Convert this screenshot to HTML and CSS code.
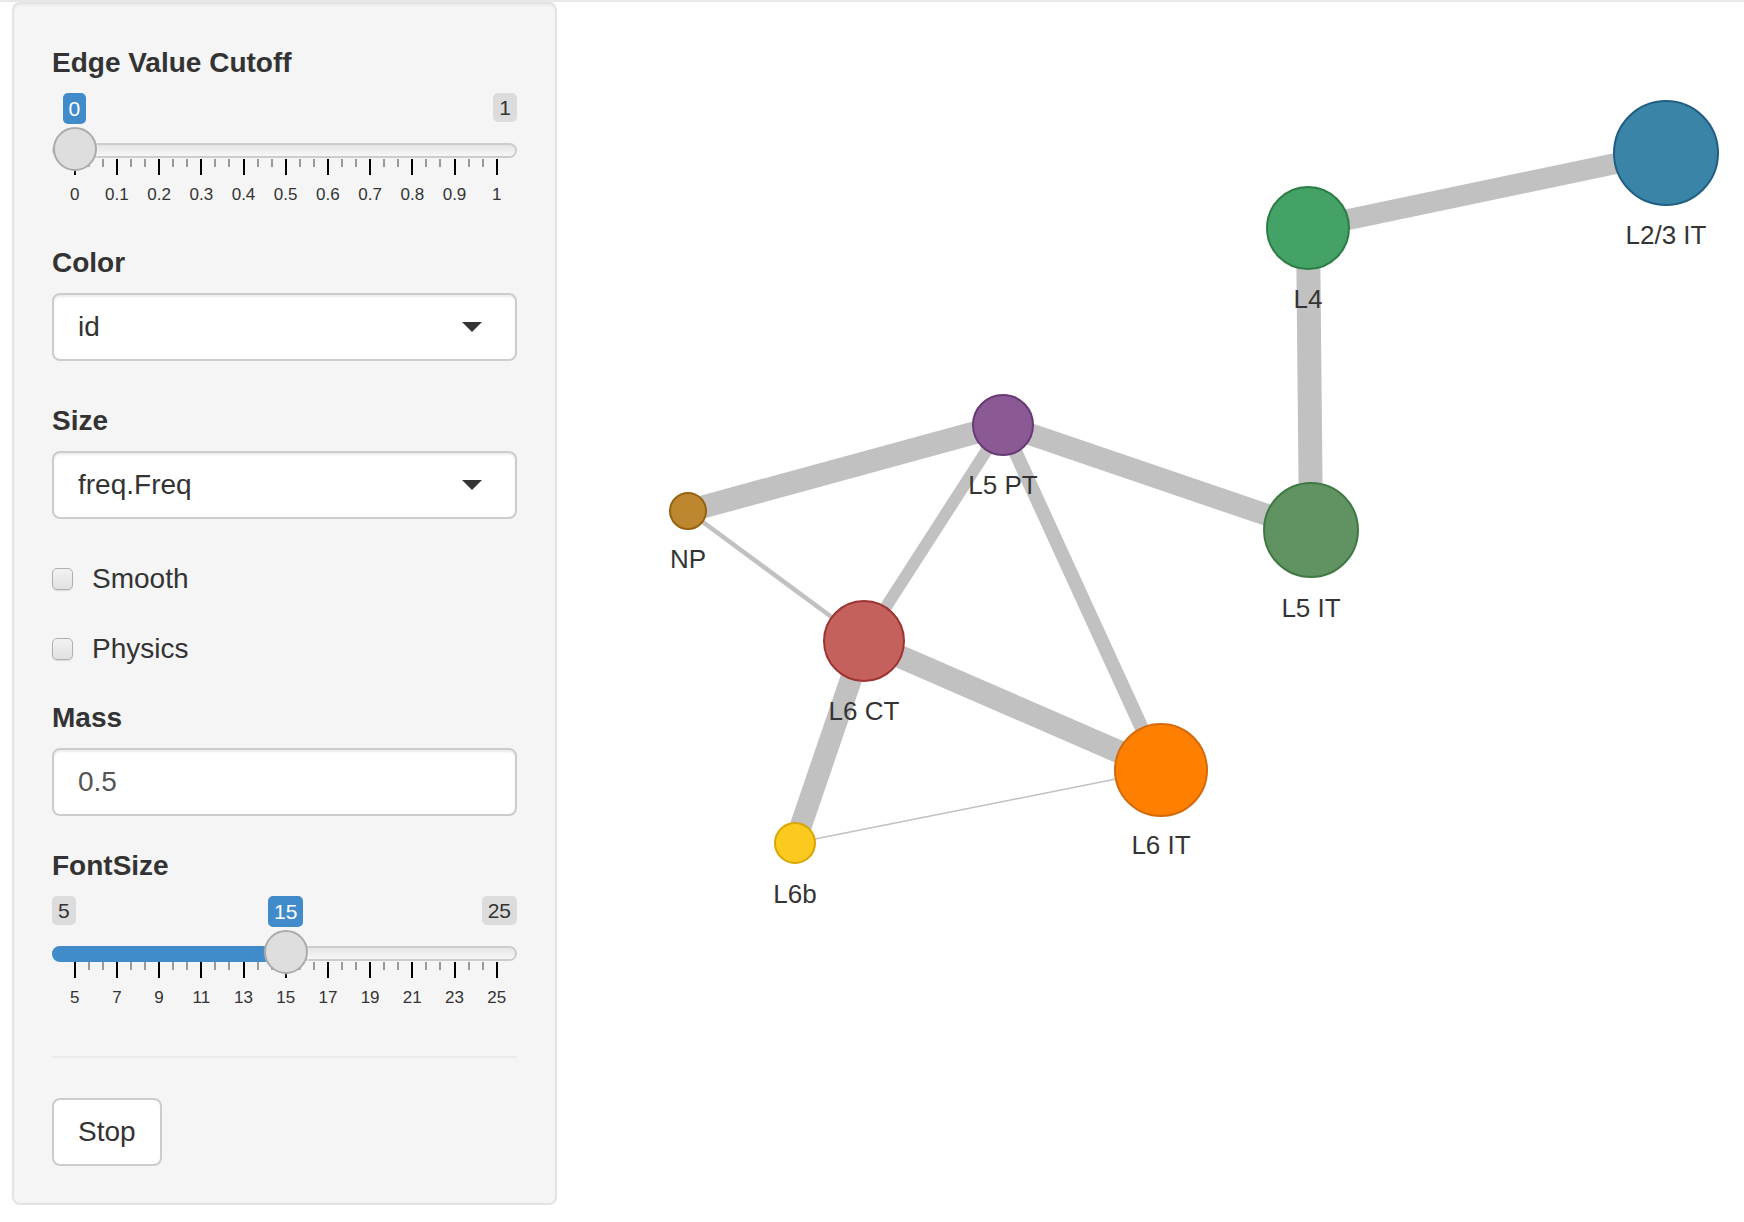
FILE: index.html
```html
<!DOCTYPE html>
<html lang="en">
<head>
<meta charset="utf-8">
<title>Network</title>
<link rel="stylesheet" href="styles.css">
</head>
<body>
<div class="topbar"></div>
<div class="layout">
  <form class="well">
    <div class="group g-edge">
      <label class="ctl-label">Edge Value Cutoff</label>
      <div class="irs">
        <span class="badge badge-single" style="left:10.5px">0</span>
        <span class="badge badge-max">1</span>
        <span class="irs-line"></span>
        <span class="irs-handle" style="left:0.7px"></span>
        <div class="irs-grid">
          <span class="pol" style="left:21.7px"></span><span class="pol small" style="left:35.8px"></span><span class="pol small" style="left:49.8px"></span>
          <span class="pol" style="left:63.9px"></span><span class="pol small" style="left:78px"></span><span class="pol small" style="left:92px"></span>
          <span class="pol" style="left:106.1px"></span><span class="pol small" style="left:120.2px"></span><span class="pol small" style="left:134.2px"></span>
          <span class="pol" style="left:148.3px"></span><span class="pol small" style="left:162.4px"></span><span class="pol small" style="left:176.4px"></span>
          <span class="pol" style="left:190.5px"></span><span class="pol small" style="left:204.6px"></span><span class="pol small" style="left:218.6px"></span>
          <span class="pol" style="left:232.7px"></span><span class="pol small" style="left:246.8px"></span><span class="pol small" style="left:260.8px"></span>
          <span class="pol" style="left:274.9px"></span><span class="pol small" style="left:289px"></span><span class="pol small" style="left:303px"></span>
          <span class="pol" style="left:317.1px"></span><span class="pol small" style="left:331.2px"></span><span class="pol small" style="left:345.2px"></span>
          <span class="pol" style="left:359.3px"></span><span class="pol small" style="left:373.4px"></span><span class="pol small" style="left:387.4px"></span>
          <span class="pol" style="left:401.5px"></span><span class="pol small" style="left:415.6px"></span><span class="pol small" style="left:429.6px"></span>
          <span class="pol" style="left:443.7px"></span>
          <span class="gtext" style="left:22.7px">0</span>
          <span class="gtext" style="left:64.9px">0.1</span>
          <span class="gtext" style="left:107.1px">0.2</span>
          <span class="gtext" style="left:149.3px">0.3</span>
          <span class="gtext" style="left:191.5px">0.4</span>
          <span class="gtext" style="left:233.7px">0.5</span>
          <span class="gtext" style="left:275.9px">0.6</span>
          <span class="gtext" style="left:318.1px">0.7</span>
          <span class="gtext" style="left:360.3px">0.8</span>
          <span class="gtext" style="left:402.5px">0.9</span>
          <span class="gtext" style="left:444.7px">1</span>
        </div>
      </div>
    </div>

    <div class="group g-color">
      <label class="ctl-label">Color</label>
      <div class="select"><span class="select-text">id</span><span class="caret"></span></div>
    </div>

    <div class="group g-size">
      <label class="ctl-label">Size</label>
      <div class="select"><span class="select-text">freq.Freq</span><span class="caret"></span></div>
    </div>

    <label class="check g-smooth"><input type="checkbox"><span>Smooth</span></label>
    <label class="check g-physics"><input type="checkbox"><span>Physics</span></label>

    <div class="group g-mass">
      <label class="ctl-label">Mass</label>
      <input class="text-input" type="text" value="0.5">
    </div>

    <div class="group g-font">
      <label class="ctl-label">FontSize</label>
      <div class="irs">
        <span class="badge badge-min">5</span>
        <span class="badge badge-single" style="left:216px">15</span>
        <span class="badge badge-max">25</span>
        <span class="irs-line"></span>
        <span class="irs-bar" style="width:234px"></span>
        <span class="irs-handle" style="left:211.7px"></span>
        <div class="irs-grid">
          <span class="pol" style="left:21.7px"></span><span class="pol small" style="left:35.8px"></span><span class="pol small" style="left:49.8px"></span>
          <span class="pol" style="left:63.9px"></span><span class="pol small" style="left:78px"></span><span class="pol small" style="left:92px"></span>
          <span class="pol" style="left:106.1px"></span><span class="pol small" style="left:120.2px"></span><span class="pol small" style="left:134.2px"></span>
          <span class="pol" style="left:148.3px"></span><span class="pol small" style="left:162.4px"></span><span class="pol small" style="left:176.4px"></span>
          <span class="pol" style="left:190.5px"></span><span class="pol small" style="left:204.6px"></span><span class="pol small" style="left:218.6px"></span>
          <span class="pol" style="left:232.7px"></span><span class="pol small" style="left:246.8px"></span><span class="pol small" style="left:260.8px"></span>
          <span class="pol" style="left:274.9px"></span><span class="pol small" style="left:289px"></span><span class="pol small" style="left:303px"></span>
          <span class="pol" style="left:317.1px"></span><span class="pol small" style="left:331.2px"></span><span class="pol small" style="left:345.2px"></span>
          <span class="pol" style="left:359.3px"></span><span class="pol small" style="left:373.4px"></span><span class="pol small" style="left:387.4px"></span>
          <span class="pol" style="left:401.5px"></span><span class="pol small" style="left:415.6px"></span><span class="pol small" style="left:429.6px"></span>
          <span class="pol" style="left:443.7px"></span>
          <span class="gtext" style="left:22.7px">5</span>
          <span class="gtext" style="left:64.9px">7</span>
          <span class="gtext" style="left:107.1px">9</span>
          <span class="gtext" style="left:149.3px">11</span>
          <span class="gtext" style="left:191.5px">13</span>
          <span class="gtext" style="left:233.7px">15</span>
          <span class="gtext" style="left:275.9px">17</span>
          <span class="gtext" style="left:318.1px">19</span>
          <span class="gtext" style="left:360.3px">21</span>
          <span class="gtext" style="left:402.5px">23</span>
          <span class="gtext" style="left:444.7px">25</span>
        </div>
      </div>
    </div>

    <hr class="divider">

    <button type="button" class="btn">Stop</button>
  </form>

  <div class="graph">
    <svg class="net" viewBox="587 2 1157 1220" width="1157" height="1220" xmlns="http://www.w3.org/2000/svg">
      <g class="edges" stroke="#c1c1c1" stroke-linecap="butt" fill="none">
        <line x1="1308" y1="228" x2="1666" y2="153" stroke-width="21"/>
        <line x1="1308" y1="228" x2="1311" y2="530" stroke-width="24"/>
        <line x1="1003" y1="425" x2="1311" y2="530" stroke-width="22"/>
        <line x1="688" y1="511" x2="1003" y2="425" stroke-width="23"/>
        <line x1="864" y1="641" x2="1161" y2="770" stroke-width="23"/>
        <line x1="864" y1="641" x2="795" y2="843" stroke-width="22"/>
        <line x1="1003" y1="425" x2="1161" y2="770" stroke-width="14"/>
        <line x1="1003" y1="425" x2="864" y2="641" stroke-width="12"/>
        <line x1="688" y1="511" x2="864" y2="641" stroke-width="4.5"/>
        <line x1="795" y1="843" x2="1161" y2="770" stroke-width="1.5"/>
      </g>
      <g class="nodes" stroke-width="2">
        <circle cx="1666" cy="153" r="52" fill="#3a84a8" stroke="#215f82"/>
        <circle cx="1308" cy="228" r="41" fill="#44a266" stroke="#2c7d45"/>
        <circle cx="1311" cy="530" r="47" fill="#609262" stroke="#3e7944"/>
        <circle cx="1003" cy="425" r="30" fill="#8b5a94" stroke="#683a74"/>
        <circle cx="688" cy="511" r="18" fill="#bf8630" stroke="#976310"/>
        <circle cx="864" cy="641" r="40" fill="#c4615c" stroke="#9c3432"/>
        <circle cx="1161" cy="770" r="46" fill="#ff8000" stroke="#d36a0c"/>
        <circle cx="795" cy="843" r="20" fill="#fcca1f" stroke="#d9a500"/>
      </g>
      <g class="labels" text-anchor="middle">
        <text x="1666" y="244">L2/3 IT</text>
        <text x="1308" y="308">L4</text>
        <text x="1311" y="617">L5 IT</text>
        <text x="1003" y="494">L5 PT</text>
        <text x="688" y="568">NP</text>
        <text x="864" y="720">L6 CT</text>
        <text x="1161" y="854">L6 IT</text>
        <text x="795" y="903">L6b</text>
      </g>
    </svg>
  </div>
</div>
</body>
</html>
```

FILE: styles.css
```css
* { box-sizing: border-box; }

html, body {
  margin: 0;
  padding: 0;
  background: #ffffff;
  font-family: "Liberation Sans", Arial, Helvetica, sans-serif;
  color: #333333;
}

.topbar {
  height: 2px;
  background: #e8e8ec;
}

.layout {
  display: flex;
  align-items: flex-start;
}

.well {
  flex: 0 0 545px;
  width: 545px;
  margin: 0 0 0 12px;
  padding: 39px 38px 37px;
  min-height: 1202px;
  background: #f5f5f5;
  border: 2px solid #e3e3e3;
  border-radius: 8px;
  box-shadow: inset 0 2px 2px rgba(0, 0, 0, 0.04);
  display: flex;
  flex-direction: column;
}

.group {
  display: flex;
  flex-direction: column;
}

.ctl-label {
  display: block;
  font-size: 28px;
  font-weight: bold;
  line-height: 40px;
  height: 40px;
  margin-bottom: 10px;
  color: #333333;
}

.g-color { margin-top: 30px; }
.g-size { margin-top: 40px; }
.g-smooth { margin-top: 40px; }
.g-physics { margin-top: 30px; }
.g-mass { margin-top: 29px; }
.g-font { margin-top: 30px; }

/* ---------- slider ---------- */
.irs {
  position: relative;
  height: 120px;
  width: 465px;
}

.badge {
  position: absolute;
  top: 0;
  height: 29px;
  padding: 0 6px;
  font-size: 21px;
  line-height: 29px;
  border-radius: 5px;
  white-space: nowrap;
}

.badge-single {
  height: 31px;
  line-height: 31px;
  background: #428bca;
  color: #ffffff;
  z-index: 3;
}

.badge-min,
.badge-max {
  background: rgba(0, 0, 0, 0.1);
  color: #333333;
}

.badge-min { left: 0; }
.badge-max { right: 0; }

.irs-line {
  position: absolute;
  left: 0;
  right: 0;
  top: 50px;
  height: 15px;
  border: 2px solid #cccccc;
  border-radius: 16px;
  background: linear-gradient(to bottom, #dddddd -50%, #ffffff 150%);
}

.irs-bar {
  position: absolute;
  left: 0;
  top: 50px;
  height: 16px;
  background: #428bca;
  border-radius: 16px 0 0 16px;
}

.irs-handle {
  position: absolute;
  top: 34px;
  width: 44px;
  height: 44px;
  border: 2px solid #ababab;
  background: #dedede;
  border-radius: 50%;
  box-shadow: 1px 1px 3px rgba(255, 255, 255, 0.3);
  z-index: 2;
}

.irs-grid {
  position: absolute;
  left: 0;
  right: 0;
  top: 66px;
  height: 54px;
}

.pol {
  position: absolute;
  top: 0;
  width: 2px;
  height: 16px;
  background: #000000;
}

.pol.small {
  height: 8px;
  background: #999999;
}

.gtext {
  position: absolute;
  top: 24px;
  width: 60px;
  margin-left: -30px;
  text-align: center;
  font-size: 17px;
  line-height: 24px;
  color: #333333;
}

/* ---------- selects & inputs ---------- */
.select {
  position: relative;
  height: 68px;
  border: 2px solid #cccccc;
  border-radius: 8px;
  background: #ffffff;
  box-shadow: inset 0 2px 2px rgba(0, 0, 0, 0.075);
  display: flex;
  align-items: center;
  padding: 0 24px;
}

.select-text {
  font-size: 28px;
  color: #333333;
  flex: 1;
}

.caret {
  width: 0;
  height: 0;
  border-left: 10px solid transparent;
  border-right: 10px solid transparent;
  border-top: 10px solid #333333;
  margin-right: 9px;
}

.text-input {
  height: 68px;
  width: 100%;
  border: 2px solid #cccccc;
  border-radius: 8px;
  background: #ffffff;
  box-shadow: inset 0 2px 2px rgba(0, 0, 0, 0.075);
  padding: 0 24px;
  font-family: inherit;
  font-size: 28px;
  color: #555555;
  outline: none;
}

/* ---------- checkboxes ---------- */
.check {
  display: flex;
  align-items: center;
  height: 40px;
  font-size: 28px;
  color: #333333;
}

.check input {
  -webkit-appearance: none;
  appearance: none;
  margin: 0 19px 0 0;
  width: 21px;
  height: 22px;
  border: 1.5px solid #b0b0b0;
  border-radius: 5px;
  background: linear-gradient(to bottom, #f2f2f2, #e1e1e1);
  box-shadow: 0 1px 1px rgba(0, 0, 0, 0.12);
}

/* ---------- divider & button ---------- */
.divider {
  border: 0;
  border-top: 2px solid #ebebeb;
  margin: 40px 0;
  width: 465px;
}

.btn {
  align-self: flex-start;
  height: 68px;
  padding: 0 24px;
  font-family: inherit;
  font-size: 28px;
  color: #333333;
  background: #ffffff;
  border: 2px solid #cccccc;
  border-radius: 8px;
}

/* ---------- graph ---------- */
.graph {
  flex: 1;
  margin-left: 30px;
}

.net {
  display: block;
}

.labels text {
  font-family: "Liberation Sans", Arial, Helvetica, sans-serif;
  font-size: 26px;
  fill: #343434;
}
```
